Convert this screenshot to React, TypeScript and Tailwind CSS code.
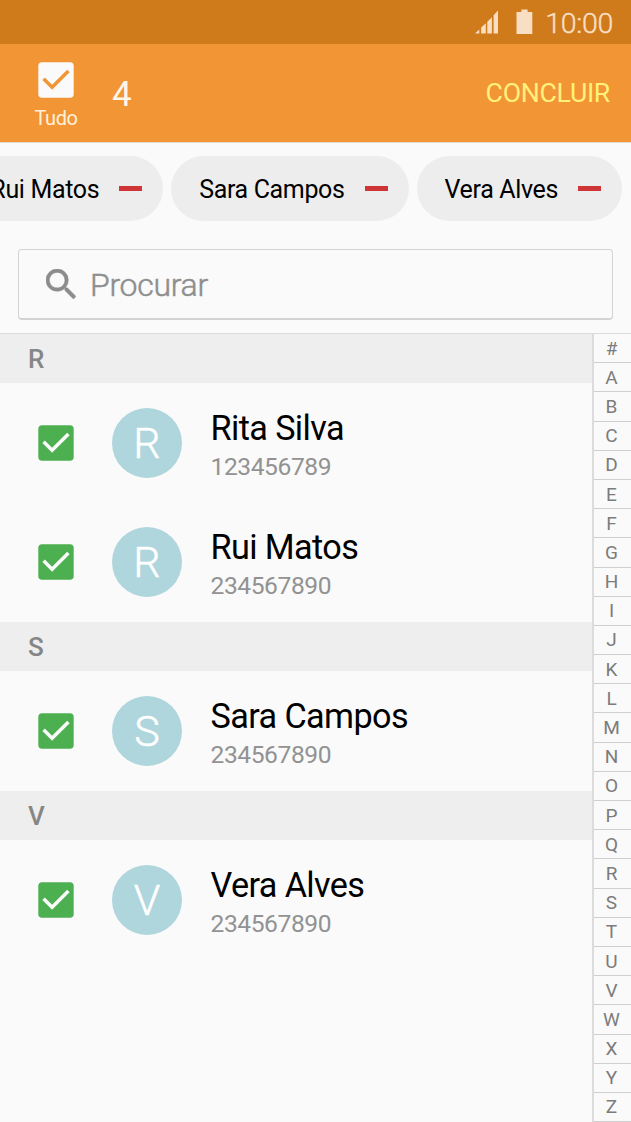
import React from 'react';

type Contact = { name: string; phone: string };
type Section = { letter: string; contacts: Contact[] };

const sections: Section[] = [
  {
    letter: 'R',
    contacts: [
      { name: 'Rita Silva', phone: '123456789' },
      { name: 'Rui Matos', phone: '234567890' },
    ],
  },
  { letter: 'S', contacts: [{ name: 'Sara Campos', phone: '234567890' }] },
  { letter: 'V', contacts: [{ name: 'Vera Alves', phone: '234567890' }] },
];

const selected = ['Rui Matos', 'Sara Campos', 'Vera Alves'];
const indexLetters = '#ABCDEFGHIJKLMNOPQRSTUVWXYZ'.split('');

function Check({ className, stroke }: { className: string; stroke: string }) {
  return (
    <svg viewBox="0 0 36 36" className={`block size-9 shrink-0 ${className}`}>
      <rect x="0.3" y="0.3" width="35.4" height="35.4" rx="3.8" fill="currentColor" />
      <path d="M5.6 16.8 L14.1 25.2 L30.4 8.9" fill="none" stroke={stroke} strokeWidth="3.5" />
    </svg>
  );
}

function StatusBar() {
  return (
    <div className="flex h-11 shrink-0 items-center justify-end bg-[#cf7a1b] pr-[18px] text-[#f8dfc4]">
      <svg viewBox="0 0 24 24" className="mr-[17px] h-6 w-6 shrink-0" fill="currentColor">
        <path d="M0 23.5 L4.3 19.4 V23.5 Z M6.2 17.6 L10.8 13.2 V23.5 H6.2 Z M12.3 11.7 L16.9 7.2 V23.5 H12.3 Z M18.6 5.2 L23 0.6 V23.5 H18.6 Z" />
      </svg>
      <svg viewBox="0 0 17 25" className="mr-[12px] mb-px h-[25px] w-[17px] shrink-0" fill="currentColor">
        <path d="M5.4 0.5 H11.6 V3 H16.3 V25 H0.5 V3 H5.4 Z" />
      </svg>
      <span className="pt-[3px] text-[28.5px] leading-[41px] font-light tracking-[-0.3px] [-webkit-text-stroke:0.4px]">10:00</span>
    </div>
  );
}

function AppBar() {
  return (
    <div className="flex h-[98px] shrink-0 bg-[#f29534]">
      <div className="flex w-28 flex-col items-center pt-[18px]">
        <Check className="text-[#fafafa]" stroke="#f29534" />
        <span className="mt-[8px] text-[20px] leading-6 tracking-[-0.4px] text-[#fff1dc]">Tudo</span>
      </div>
      <span className="text-[35px] leading-[102px] text-[#fff6e9]">4</span>
      <span className="ml-auto pr-[21px] text-[26.7px] leading-[98px] tracking-[-0.3px] text-[#fff17c]">CONCLUIR</span>
    </div>
  );
}

function Chips() {
  return (
    <div className="flex h-[79px] shrink-0 items-end justify-end gap-2 overflow-hidden border-t border-[#e9dccb] pr-[9px]">
      {selected.map((name) => (
        <div key={name} className="flex h-[65px] shrink-0 items-center rounded-full bg-[#ededed] pr-[21px] pl-[28px]">
          <span className="pt-px text-[25px] leading-[65px] tracking-[-0.35px] whitespace-nowrap text-black">{name}</span>
          <span className="ml-[20px] h-[5px] w-[23px] bg-[#cf3437]" />
        </div>
      ))}
    </div>
  );
}

function Search() {
  return (
    <div className="mx-[18px] mt-[28px] flex h-[71px] shrink-0 items-center rounded-[4px] border border-b-2 border-[#d3d3d3] pl-[27px]">
      <svg viewBox="3 3 17.49 17.49" className="size-[30px] shrink-0 text-[#8c8c8c]" fill="currentColor" stroke="currentColor" strokeWidth="0.3">
        <path d="M15.5 14h-.79l-.28-.27A6.471 6.471 0 0 0 16 9.5 6.5 6.5 0 1 0 9.5 16c1.61 0 3.09-.59 4.23-1.57l.27.28v.79l5 4.99L20.49 19l-4.99-5zm-6 0C7.01 14 5 11.99 5 9.5S7.01 5 9.5 5 14 7.01 14 9.5 11.99 14 9.5 14z" />
      </svg>
      <span className="ml-[14px] pt-px text-[32px] leading-[66px] font-light tracking-[-0.3px] text-[#8e8e8e] [-webkit-text-stroke:0.5px]">
        Procurar
      </span>
    </div>
  );
}

function Row({ contact }: { contact: Contact }) {
  return (
    <div className="flex h-[119.3px] items-center pl-[38px]">
      <Check className="text-[#4caf50]" stroke="#fafafa" />
      <div className="ml-[38px] size-[70px] shrink-0 rounded-full bg-[#aed6dc] text-center text-[43px] leading-[70px] font-light text-white [-webkit-text-stroke:0.5px]">
        {contact.name[0]}
      </div>
      <div className="ml-[28.5px] flex flex-col gap-[3px] pt-[4px] whitespace-nowrap">
        <span className="text-[34.2px] leading-10 tracking-[-0.6px] text-black">{contact.name}</span>
        <span className="pt-px text-[24.6px] leading-[29px] tracking-[-0.42px] text-[#929292]">{contact.phone}</span>
      </div>
    </div>
  );
}

export default function App() {
  return (
    <div className="flex h-[1122px] w-[631px] flex-col overflow-hidden bg-[#fafafa] font-['Roboto',sans-serif]">
      <StatusBar />
      <AppBar />
      <Chips />
      <Search />
      <div className="mt-[13px] flex min-h-0 flex-1 border-t border-[#dcdcdc]">
        <div className="min-w-0 flex-1">
          {sections.map((section) => (
            <section key={section.letter} className="pb-[0.6px]">
              <h2 className="h-[49px] bg-[#eeeeee] pl-[28px] text-[26px] leading-[51px] font-medium text-[#868686]">
                {section.letter}
              </h2>
              {section.contacts.map((contact) => (
                <Row key={contact.name} contact={contact} />
              ))}
            </section>
          ))}
        </div>
        <nav className="flex w-[39px] shrink-0 flex-col border-l-2 border-[#dcdcdc]">
          {indexLetters.map((letter) => (
            <div
              key={letter}
              className="flex min-h-0 flex-1 items-center justify-center border-b border-[#cfcfcf] pt-px pr-[2px] text-[19px] leading-7 text-[#7c7c7c]"
            >
              {letter}
            </div>
          ))}
        </nav>
      </div>
    </div>
  );
}
